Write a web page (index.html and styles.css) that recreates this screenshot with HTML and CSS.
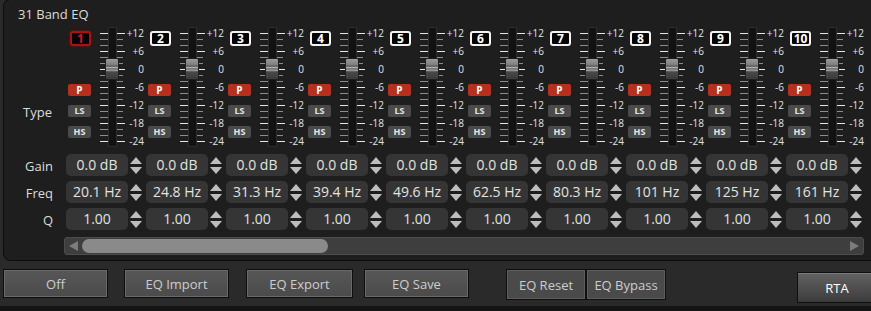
FILE: index.html
```html
<!DOCTYPE html>
<html>
<head>
<meta charset="utf-8">
<link rel="stylesheet" href="styles.css">
</head>
<body>
<div class="app">
  <div class="panel">
    <div class="title">31 Band EQ</div>
    <div class="grid">
      <div class="lbl lbl-type">Type</div>

      <div class="band"><div class="btns"><span class="num sel">1</span><span class="tb p">P</span><span class="tb">LS</span><span class="tb">HS</span></div><div class="fader"><div class="ticks"></div><div class="track"></div><div class="thumb"></div></div><div class="scale"><span>+12</span><span>+6</span><span>0</span><span>-6</span><span>-12</span><span>-18</span><span>-24</span></div></div>
      <div class="band"><div class="btns"><span class="num">2</span><span class="tb p">P</span><span class="tb">LS</span><span class="tb">HS</span></div><div class="fader"><div class="ticks"></div><div class="track"></div><div class="thumb"></div></div><div class="scale"><span>+12</span><span>+6</span><span>0</span><span>-6</span><span>-12</span><span>-18</span><span>-24</span></div></div>
      <div class="band"><div class="btns"><span class="num">3</span><span class="tb p">P</span><span class="tb">LS</span><span class="tb">HS</span></div><div class="fader"><div class="ticks"></div><div class="track"></div><div class="thumb"></div></div><div class="scale"><span>+12</span><span>+6</span><span>0</span><span>-6</span><span>-12</span><span>-18</span><span>-24</span></div></div>
      <div class="band"><div class="btns"><span class="num">4</span><span class="tb p">P</span><span class="tb">LS</span><span class="tb">HS</span></div><div class="fader"><div class="ticks"></div><div class="track"></div><div class="thumb"></div></div><div class="scale"><span>+12</span><span>+6</span><span>0</span><span>-6</span><span>-12</span><span>-18</span><span>-24</span></div></div>
      <div class="band"><div class="btns"><span class="num">5</span><span class="tb p">P</span><span class="tb">LS</span><span class="tb">HS</span></div><div class="fader"><div class="ticks"></div><div class="track"></div><div class="thumb"></div></div><div class="scale"><span>+12</span><span>+6</span><span>0</span><span>-6</span><span>-12</span><span>-18</span><span>-24</span></div></div>
      <div class="band"><div class="btns"><span class="num">6</span><span class="tb p">P</span><span class="tb">LS</span><span class="tb">HS</span></div><div class="fader"><div class="ticks"></div><div class="track"></div><div class="thumb"></div></div><div class="scale"><span>+12</span><span>+6</span><span>0</span><span>-6</span><span>-12</span><span>-18</span><span>-24</span></div></div>
      <div class="band"><div class="btns"><span class="num">7</span><span class="tb p">P</span><span class="tb">LS</span><span class="tb">HS</span></div><div class="fader"><div class="ticks"></div><div class="track"></div><div class="thumb"></div></div><div class="scale"><span>+12</span><span>+6</span><span>0</span><span>-6</span><span>-12</span><span>-18</span><span>-24</span></div></div>
      <div class="band"><div class="btns"><span class="num">8</span><span class="tb p">P</span><span class="tb">LS</span><span class="tb">HS</span></div><div class="fader"><div class="ticks"></div><div class="track"></div><div class="thumb"></div></div><div class="scale"><span>+12</span><span>+6</span><span>0</span><span>-6</span><span>-12</span><span>-18</span><span>-24</span></div></div>
      <div class="band"><div class="btns"><span class="num">9</span><span class="tb p">P</span><span class="tb">LS</span><span class="tb">HS</span></div><div class="fader"><div class="ticks"></div><div class="track"></div><div class="thumb"></div></div><div class="scale"><span>+12</span><span>+6</span><span>0</span><span>-6</span><span>-12</span><span>-18</span><span>-24</span></div></div>
      <div class="band"><div class="btns"><span class="num">10</span><span class="tb p">P</span><span class="tb">LS</span><span class="tb">HS</span></div><div class="fader"><div class="ticks"></div><div class="track"></div><div class="thumb"></div></div><div class="scale"><span>+12</span><span>+6</span><span>0</span><span>-6</span><span>-12</span><span>-18</span><span>-24</span></div></div>

      <div class="lbl">Gain</div>
      <div class="spin"><div class="box">0.0 dB</div><div class="arr"></div></div>
      <div class="spin"><div class="box">0.0 dB</div><div class="arr"></div></div>
      <div class="spin"><div class="box">0.0 dB</div><div class="arr"></div></div>
      <div class="spin"><div class="box">0.0 dB</div><div class="arr"></div></div>
      <div class="spin"><div class="box">0.0 dB</div><div class="arr"></div></div>
      <div class="spin"><div class="box">0.0 dB</div><div class="arr"></div></div>
      <div class="spin"><div class="box">0.0 dB</div><div class="arr"></div></div>
      <div class="spin"><div class="box">0.0 dB</div><div class="arr"></div></div>
      <div class="spin"><div class="box">0.0 dB</div><div class="arr"></div></div>
      <div class="spin"><div class="box">0.0 dB</div><div class="arr"></div></div>

      <div class="lbl">Freq</div>
      <div class="spin"><div class="box">20.1 Hz</div><div class="arr"></div></div>
      <div class="spin"><div class="box">24.8 Hz</div><div class="arr"></div></div>
      <div class="spin"><div class="box">31.3 Hz</div><div class="arr"></div></div>
      <div class="spin"><div class="box">39.4 Hz</div><div class="arr"></div></div>
      <div class="spin"><div class="box">49.6 Hz</div><div class="arr"></div></div>
      <div class="spin"><div class="box">62.5 Hz</div><div class="arr"></div></div>
      <div class="spin"><div class="box">80.3 Hz</div><div class="arr"></div></div>
      <div class="spin"><div class="box">101 Hz</div><div class="arr"></div></div>
      <div class="spin"><div class="box">125 Hz</div><div class="arr"></div></div>
      <div class="spin"><div class="box">161 Hz</div><div class="arr"></div></div>

      <div class="lbl">Q</div>
      <div class="spin"><div class="box">1.00</div><div class="arr"></div></div>
      <div class="spin"><div class="box">1.00</div><div class="arr"></div></div>
      <div class="spin"><div class="box">1.00</div><div class="arr"></div></div>
      <div class="spin"><div class="box">1.00</div><div class="arr"></div></div>
      <div class="spin"><div class="box">1.00</div><div class="arr"></div></div>
      <div class="spin"><div class="box">1.00</div><div class="arr"></div></div>
      <div class="spin"><div class="box">1.00</div><div class="arr"></div></div>
      <div class="spin"><div class="box">1.00</div><div class="arr"></div></div>
      <div class="spin"><div class="box">1.00</div><div class="arr"></div></div>
      <div class="spin"><div class="box">1.00</div><div class="arr"></div></div>
    </div>
    <div class="scroll">
      <div class="sarrow left"></div>
      <div class="sthumb"></div>
      <div class="sfill"></div>
      <div class="sarrow right"></div>
    </div>
  </div>
  <div class="bar">
    <div class="btn b-off">Off</div>
    <div class="btn b-imp">EQ Import</div>
    <div class="btn b-exp">EQ Export</div>
    <div class="btn b-save">EQ Save</div>
    <div class="btn b-reset">EQ Reset</div>
    <div class="btn b-byp">EQ Bypass</div>
    <div class="btn b-rta">RTA</div>
  </div>
</div>
</body>
</html>
```
FILE: styles.css
```css
* { box-sizing: border-box; }
html, body { margin: 0; height: 311px; overflow: hidden; }
body {
  background: #141414;
  font-family: "Open Sans", "Noto Sans", sans-serif;
  color: #dcdcdc;
}
.app {
  height: 306px;
  background: #2a2a2a;
  overflow: hidden;
}
.panel {
  margin: -1px 0 0 3px;
  width: 900px;
  height: 262px;
  border: 1px solid #0d0d0d;
  border-radius: 7px;
  background: #1e1e1e;
}
.title {
  height: 27px;
  padding: 5px 0 0 14px;
  font-size: 13px;
  line-height: 18px;
  color: #dcdcdc;
}
.grid {
  display: grid;
  grid-template-columns: 62px repeat(10, 80px);
  grid-template-rows: 122px 22px 22px 22px;
  row-gap: 5px;
}
.lbl {
  font-size: 13px;
  line-height: 18px;
  padding: 3px 13px 0 0;
  text-align: right;
  color: #dcdcdc;
}
.lbl-type { padding-top: 76px; padding-right: 14px; }

/* band */
.band { display: flex; }
.btns {
  width: 26px;
  flex-shrink: 0;
  display: flex;
  flex-direction: column;
  align-items: flex-start;
}
.num {
  margin: 4px 0 0 4px;
  width: 21px;
  height: 15px;
  border: 2px solid #f2f2f2;
  border-radius: 3px;
  background: #050505;
  color: #fff;
  font-weight: 700;
  font-size: 12px;
  line-height: 11px;
  text-align: center;
}
.num.sel {
  border-color: #a81414;
  color: #c81e1e;
  box-shadow: 0 0 3px #8a0c0c;
}
.tb {
  margin: 9px 0 0 2px;
  width: 23px;
  height: 12px;
  border-radius: 2px;
  background: #4a4a4a;
  color: #e6e6e6;
  font-weight: 700;
  font-size: 9px;
  line-height: 12px;
  text-align: center;
}
.tb.p {
  margin-top: 38px;
  background: #b5301f;
  color: #fff;
  font-size: 10px;
}
.fader {
  position: relative;
  flex-shrink: 0;
  margin-left: 8px;
  width: 25px;
  height: 122px;
}
.ticks {
  margin-top: 6px;
  height: 109px;
  background:
    repeating-linear-gradient(to bottom, #e6e6e6 0 1px, transparent 1px 18px),
    repeating-linear-gradient(to bottom, #8c8c8c 0 1px, transparent 1px 6px);
  background-size: 25px 109px, 23px 109px;
  background-repeat: no-repeat;
}
.track {
  position: absolute;
  left: 8px;
  top: 0;
  width: 9px;
  height: 120px;
  background: #121212;
  border: 1px solid #2c2c2c;
  border-radius: 1px;
}
.thumb {
  position: absolute;
  left: 5px;
  top: 31px;
  width: 14px;
  height: 22px;
  border: 1px solid #202020;
  border-radius: 2px;
  background: linear-gradient(to bottom,
    #9a9a9a 0, #7e7e7e 30%, #505050 36%, #b4b4b4 42%, #606060 50%, #a8a8a8 56%, #4a4a4a 64%, #3a3a3a 100%);
}
.scale {
  width: 19px;
  flex-shrink: 0;
  display: grid;
  grid-template-rows: repeat(7, 12px);
  row-gap: 6px;
  justify-items: end;
  font-size: 10px;
  line-height: 12px;
  color: #e2e2e2;
}

/* spin boxes */
.spin { display: flex; }
.box {
  width: 62px;
  flex-shrink: 0;
  height: 22px;
  border-radius: 5px;
  background: #353535;
  color: #e2e2e2;
  font-size: 14px;
  line-height: 22px;
  text-align: center;
}
.arr {
  margin-left: 1px;
  width: 13px;
  flex-shrink: 0;
  display: flex;
  flex-direction: column;
  justify-content: center;
  align-items: center;
  gap: 3px;
}
.arr::before, .arr::after {
  content: "";
  width: 0;
  height: 0;
  border-left: 6px solid transparent;
  border-right: 6px solid transparent;
}
.arr::before { border-bottom: 7px solid #bdbdbd; }
.arr::after { border-top: 7px solid #bdbdbd; }

/* scrollbar */
.scroll {
  margin: 7px 0 0 60px;
  width: 800px;
  height: 18px;
  display: flex;
  align-items: center;
  background: #3e3e3e;
  border: 1px solid #4c4c4c;
  border-radius: 3px;
}
.sarrow { width: 17px; height: 16px; flex-shrink: 0; display: flex; align-items: center; justify-content: center; }
.sarrow::before {
  content: "";
  width: 0; height: 0;
  border-top: 5px solid transparent;
  border-bottom: 5px solid transparent;
}
.sarrow.left::before { border-right: 9px solid #7c7c7c; }
.sarrow.right::before { border-left: 9px solid #7c7c7c; }
.sthumb {
  width: 246px;
  flex-shrink: 0;
  height: 14px;
  border-radius: 7px;
  background: #8a8a8a;
}
.sfill { flex: 1; }

/* bottom buttons */
.bar {
  display: flex;
  align-items: flex-start;
  padding-top: 8px;
}
.btn {
  flex-shrink: 0;
  height: 29px;
  width: 105px;
  border: 1px solid #0e0e0e;
  box-shadow: inset 0 0 0 1px #6a6a6a;
  background: linear-gradient(to bottom, #575757, #4b4b4b);
  color: #cdcdcd;
  font-size: 13px;
  display: flex;
  align-items: center;
  justify-content: center;
}
.b-off { margin-left: 3px; width: 105px; }
.b-imp { margin-left: 16px; }
.b-exp { margin-left: 17px; width: 107px; }
.b-save { margin-left: 11px; }
.b-reset { margin-left: 37px; width: 80px; height: 31px; background: #4a4a4a; box-shadow: inset 0 0 0 1px #5e5e5e; }
.b-byp { margin-left: 0; width: 80px; height: 31px; background: #4a4a4a; box-shadow: inset 0 0 0 1px #5e5e5e; }
.b-rta {
  margin: 3px 0 0 131px;
  width: 80px;
  height: 31px;
  color: #fff;
  background: linear-gradient(to bottom, #626262, #3c3c3c);
  box-shadow: inset 0 1px 0 #7a7a7a;
}
```
